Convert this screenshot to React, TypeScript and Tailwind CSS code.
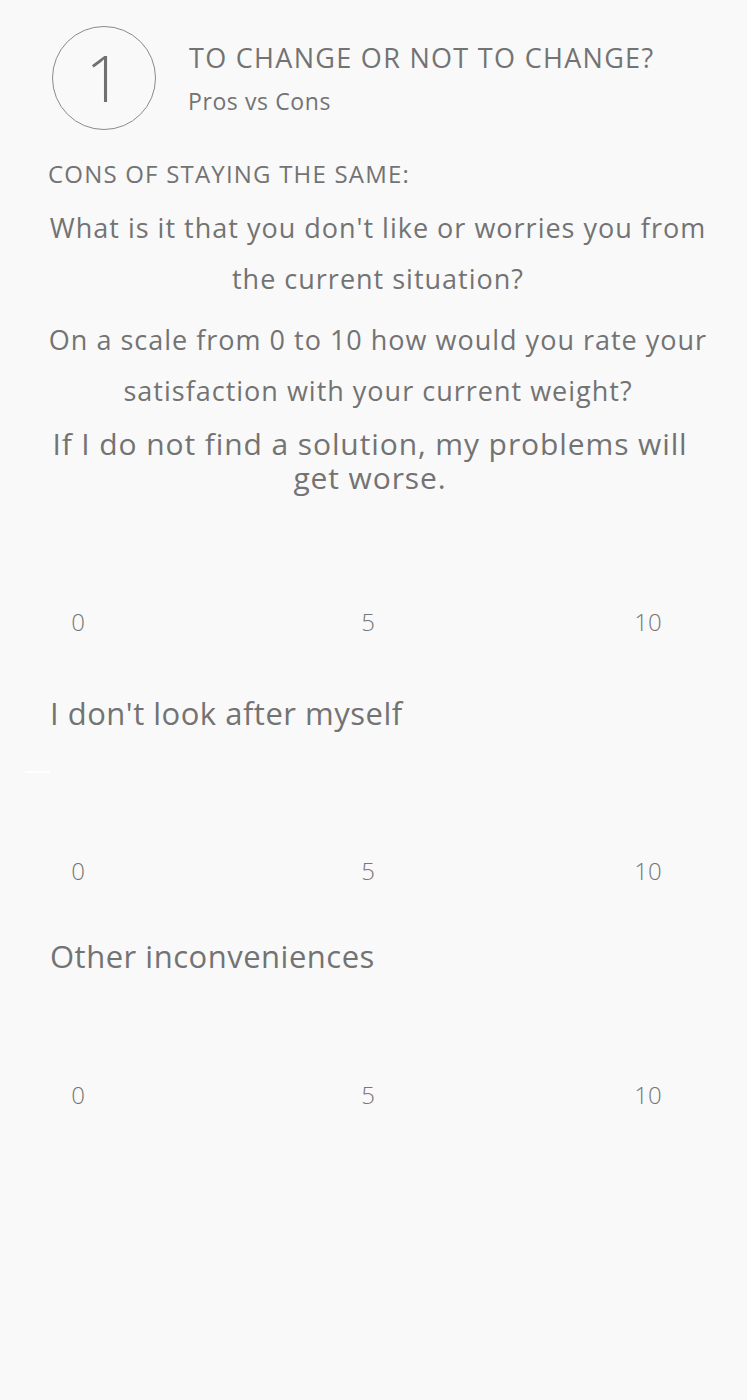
import React from "react";

const scaleMarks = ["0", "5", "10"];

function ScaleLabels({ className = "" }: { className?: string }) {
  return (
    <div className={`flex items-center text-[24px] font-light leading-none text-[#767676] ${className}`}>
      <span className="w-[60px] ml-[48px] text-center">{scaleMarks[0]}</span>
      <span className="w-[60px] ml-[230px] text-center">{scaleMarks[1]}</span>
      <span className="w-[60px] ml-[220px] text-center">{scaleMarks[2]}</span>
    </div>
  );
}

export default function App() {
  return (
    <div
      className="min-h-[1400px] w-full bg-[#f9f9f9] text-[#737373]"
      style={{ fontFamily: '"Open Sans", "Noto Sans", sans-serif' }}
    >
      {/* Header */}
      <div className="flex items-center pt-[26px] pl-[52px]">
        <div className="w-[104px] h-[104px] rounded-full border border-[#8a8a8a] flex items-center justify-center">
          <span className="text-[64px] font-light leading-none text-[#707070]">1</span>
        </div>
        <div className="ml-[33px] flex flex-col">
          <span className="text-[27px] leading-none tracking-[1.3px]">TO CHANGE OR NOT TO CHANGE?</span>
          <span className="text-[23px] leading-none tracking-[0.6px] mt-[19px] -ml-[1px]">Pros vs Cons</span>
        </div>
      </div>

      <p className="mt-[32px] pl-[48px] text-[24px] leading-none tracking-[1.2px]">CONS OF STAYING THE SAME:</p>

      {/* Questions */}
      <div className="mt-[16px] ml-[34px] mr-[25px] text-center text-[27px] leading-[51px] tracking-[1px]">
        <p>What is it that you don't like or worries you from the current situation?</p>
        <p className="mt-[10px]">On a scale from 0 to 10 how would you rate your satisfaction with your current weight?</p>
      </div>

      {/* Item 1 */}
      <p className="mt-[11px] ml-[36px] mr-[43px] text-center text-[30px] leading-[34px] tracking-[0.9px]">
        If I do not find a solution, my problems will get worse.
      </p>
      <ScaleLabels className="mt-[115px]" />

      {/* Item 2 */}
      <p className="mt-[59px] pl-[50px] text-[31px] leading-[40px] tracking-[0.5px]">I don't look after myself</p>
      <div className="mt-[38px] ml-[25px] w-[25px] h-[2px] bg-white" />
      <ScaleLabels className="mt-[86px]" />

      {/* Item 3 */}
      <p className="mt-[53px] pl-[50px] text-[31px] leading-[40px] tracking-[0.5px]">Other inconveniences</p>
      <ScaleLabels className="mt-[107px]" />
    </div>
  );
}
